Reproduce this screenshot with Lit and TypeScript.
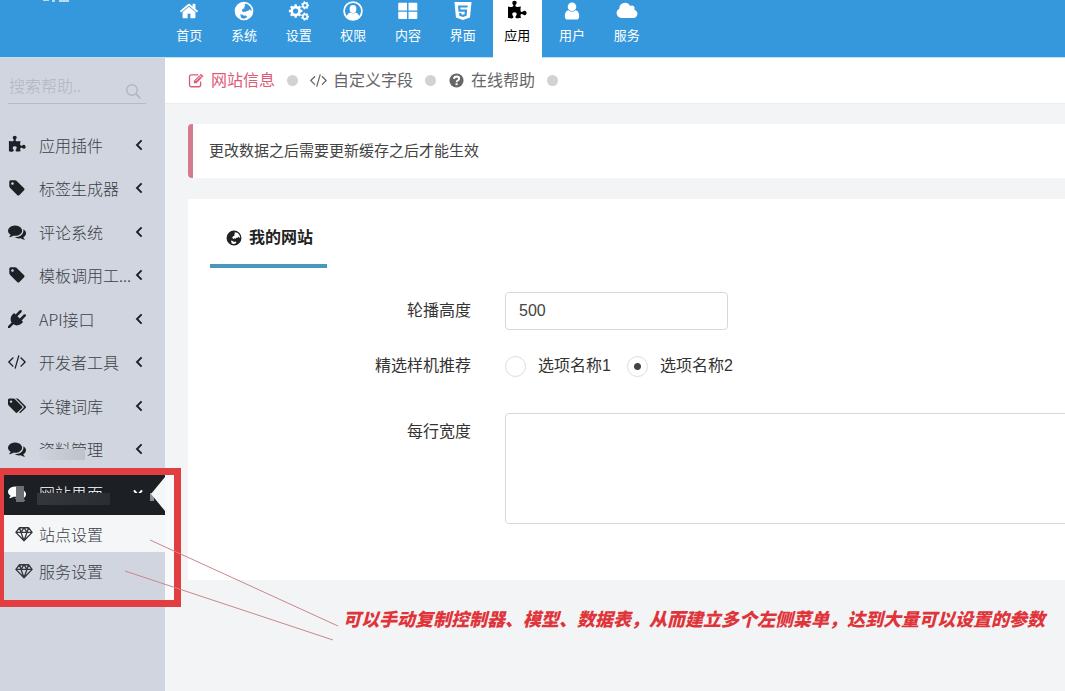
import { LitElement, html, css, svg, TemplateResult } from "lit";
import { customElement, property, state } from "lit/decorators.js";
import { classMap } from "lit/directives/class-map.js";

/** Outline of a toothed wheel with a round hole. */
function gear(cx: number, cy: number, r: number, teeth: number, hole: number): string {
  const pts: string[] = [];
  const step = (Math.PI * 2) / teeth;
  for (let i = 0; i < teeth; i++) {
    const a = i * step;
    for (const [k, rr] of [[-0.3, 0.78], [-0.22, 1], [0.22, 1], [0.3, 0.78]]) {
      pts.push(`${(cx + Math.cos(a + k * step) * r * rr).toFixed(1)} ${(cy + Math.sin(a + k * step) * r * rr).toFixed(1)}`);
    }
  }
  return `M${pts.join("L")}ZM${cx - hole} ${cy}a${hole} ${hole} 0 1 0 ${hole * 2} 0a${hole} ${hole} 0 1 0 ${-hole * 2} 0Z`;
}

interface Glyph { box: string; body: TemplateResult; }

const solid = (d: string, box = "0 0 1792 1792"): Glyph => ({
  box,
  body: svg`<path fill="currentColor" fill-rule="evenodd" d=${d}></path>`,
});

const COMMENTS = "M1408 768q0 139-94 257t-256.5 186.5-353.5 68.5q-86 0-176-16-124 88-278 128-36 9-86 16h-3q-11 0-20.5-8t-11.5-21q-1-3-1-6.5t.5-6.5 2-6l2.5-5 3.5-5.5 4-5 4.5-5 4-4.5q5-6 23-25t26-29.5 22.5-29 25-38.5 20.5-44q-124-72-195-177t-71-224q0-139 94-257t256.5-186.5 353.5-68.5 353.5 68.5 256.5 186.5 94 257zm384 256q0 120-71 224.5t-195 176.5q10 24 20.5 44t25 38.5 22.5 29 26 29.5 23 25q1 1 4 4.5t4.5 5 4 5 3.5 5.5l2.5 5 2 6 .5 6.5-1 6.5q-3 14-13 22t-22 7q-50-7-86-16-154-40-278-128-90 16-176 16-271 0-472-132 58 4 88 4 161 0 309-45t264-129q125-92 192-212t67-254q0-77-23-152 129 71 204 178t75 230z";

const GLYPHS: Record<string, Glyph> = {
  home: solid("M1472 992v480q0 26-19 45t-45 19h-384v-384h-256v384h-384q-26 0-45-19t-19-45v-480q0-1 .5-3t.5-3l575-474 575 474q1 2 1 6zm223-69l-62 74q-8 9-21 11h-3q-13 0-21-7l-692-577-692 577q-12 8-24 7-13-2-21-11l-62-74q-8-10-7-23.5t11-21.5l719-599q32-26 76-26t76 26l244 204v-195q0-14 9-23t23-9h192q14 0 23 9t9 23v408l219 182q10 8 11 21.5t-7 23.5z"),
  globe: solid("M896 60a836 836 0 1 0 0 1672a836 836 0 1 0 0-1672ZM1010 240L1260 310L1430 460L1550 680L1590 900L1500 860L1440 760L1350 790L1270 900L1160 880L1060 980L940 930L860 1010L760 940L700 800L800 690L960 640L900 540L1010 440L940 330ZM560 1180L760 1230L900 1330L1060 1300L1180 1400L1020 1540L860 1580L640 1500Z"),
  cogs: solid(gear(640, 900, 620, 8, 235) + gear(1500, 380, 370, 7, 130) + gear(1500, 1410, 370, 7, 130), "40 0 1820 1792"),
  usercircle: {
    box: "0 0 20 20",
    body: svg`<circle cx="10" cy="10" r="8.9" fill="none" stroke="currentColor" stroke-width="1.8"></circle>
      <ellipse cx="10" cy="8" rx="3.4" ry="3.9" fill="currentColor"></ellipse>
      <path fill="currentColor" d="M3.6 15.6q1.2-3.9 3.8-4.2q2.6 1.7 5.2 0q2.6.3 3.8 4.2q-2.6 3-6.4 3t-6.4-3Z"></path>`,
  },
  grid: solid("M20 250q0-90 90-90h700v680h-790ZM940 160h700q90 0 90 90v590h-790ZM20 960h790v660h-700q-90 0-90-90ZM940 960h790v570q0 90-90 90h-700Z"),
  html5: solid("M130 80h1532l-140 1400-630 232-626-232ZM450 400l46 560h560l-20 230-144 44-144-44-12-110h-190l20 250 326 100 326-100 50-560h-600l-12-180h640l18-190Z"),
  puzzle: solid("M1755 1083q0 81-44.5 135t-123.5 54q-41 0-77.5-17.5t-59-38-56.5-38-71-17.5q-110 0-110 124 0 39 16 115t15 115v5q-22 0-33 1-34 3-97.5 11.5t-115.5 13.5-98 5q-61 0-103-26.5t-42-83.5q0-37 17.5-71t38-56.5 38-59 17.5-77.5q0-79-54-123.5t-135-44.5q-84 0-143 45.5t-59 127.5q0 43 15 83t33.5 64.5 33.5 53 15 50.5q0 45-46 89-37 35-117 35-95 0-245-24-9-2-27.5-4t-27.5-4l-13-2q-1 0-3-1-2 0-2-1v-1024q2 1 17.5 3.5t34 5 21.5 3.5q150 24 245 24 80 0 117-35 46-44 46-89 0-22-15-50.5t-33.5-53-33.5-64.5-15-83q0-82 59-127.5t144-45.5q80 0 134 44.5t54 123.5q0 41-17.5 77.5t-38 59-38 56.5-17.5 71q0 57 42 83.5t103 26.5q64 0 180-15t163-17v2q-1 2-3.5 17.5t-5 34-3.5 21.5q-24 150-24 245 0 80 35 117 44 46 89 46 22 0 50.5-15t53-33.5 64.5-33.5 83-15q82 0 127.5 59t45.5 143z"),
  user: solid("M1536 1399q0 109-62.5 187t-150.5 78h-854q-88 0-150.5-78t-62.5-187q0-85 8.5-160.5t31.5-152 58.5-131 94-89 134.5-34.5q131 128 313 128t313-128q76 0 134.5 34.5t94 89 58.5 131 31.5 152 8.5 160.5zm-256-887q0 159-112.5 271.5t-271.5 112.5-271.5-112.5-112.5-271.5 112.5-271.5 271.5-112.5 271.5 112.5 112.5 271.5z"),
  cloud: solid("M1984 1152q0 159-112.5 271.5t-271.5 112.5h-1088q-185 0-316.5-131.5t-131.5-316.5q0-132 71-241.5t187-163.5q-2-28-2-43 0-212 150-362t362-150q158 0 286.5 88t187.5 230q70-62 166-62 106 0 181 75t75 181q0 75-41 138 129 30 213 134.5t84 239.5z", "104 80 1840 1632"),
  tag: solid("M576 448q0-53-37.5-90.5t-90.5-37.5-90.5 37.5-37.5 90.5 37.5 90.5 90.5 37.5 90.5-37.5 37.5-90.5zm1067 576q0 53-37 90l-491 492q-39 37-91 37-53 0-90-37l-715-716q-38-37-64.5-101t-26.5-117v-416q0-52 38-90t90-38h416q53 0 117 26.5t102 64.5l715 714q37 39 37 91z"),
  tags: solid("M448 448q0-53-37.5-90.5t-90.5-37.5-90.5 37.5-37.5 90.5 37.5 90.5 90.5 37.5 90.5-37.5 37.5-90.5zm1067 576q0 53-37 90l-491 492q-39 37-91 37-53 0-90-37l-715-716q-38-37-64.5-101t-26.5-117v-416q0-52 38-90t90-38h416q53 0 117 26.5t102 64.5l715 714q37 39 37 91zm384 0q0 53-37 90l-491 492q-39 37-91 37-36 0-59-14t-53-45l470-470q37-37 37-90 0-52-37-91l-715-714q-38-38-102-64.5t-117-26.5h224q53 0 117 26.5t102 64.5l715 714q37 39 37 91z", "0 60 1900 1700"),
  comments: solid(COMMENTS),
  plug: solid("M1755 453q37 38 37 90.5t-37 90.5l-401 400 150 150-160 160q-163 163-389.5 186.5t-411.5-100.5l-362 362h-181v-181l362-362q-124-185-100.5-411.5t186.5-389.5l160-160 150 150 400-401q38-37 91-37t90 37 37 90.5-37 90.5l-400 401 234 234 401-400q38-37 91-37t90 37z"),
  code: solid("M553 1399l-50 50q-10 10-23 10t-23-10l-466-466q-10-10-10-23t10-23l466-466q10-10 23-10t23 10l50 50q10 10 10 23t-10 23l-393 393 393 393q10 10 10 23t-10 23zm591-1067l-373 1291q-4 13-15.5 19.5t-23.5 2.5l-62-17q-13-4-19.5-15.5t-2.5-24.5l373-1291q4-13 15.5-19.5t23.5-2.5l62 17q13 4 19.5 15.5t2.5 24.5zm657 651l-466 466q-10 10-23 10t-23-10l-50-50q-10-10-10-23t10-23l393-393-393-393q-10-10-10-23t10-23l50-50q10-10 23-10t23 10l466 466q10 10 10 23t-10 23z", "-20 60 1840 1792"),
  edit: {
    box: "0 0 18 18",
    body: svg`<path fill="none" stroke="currentColor" stroke-width="1.4" d="M13.4 10v3.6q0 2-2 2H3.6q-2 0-2-2V5q0-2 2-2h7.2"></path>
      <path fill="currentColor" d="M6.2 9.2L13.6 1.8L16.4 4.6L9 12H6.2Z"></path>
      <path stroke="#fff" stroke-width=".8" d="M12 3.2l3 3M8 9.6l5-5"></path>`,
  },
  help: {
    box: "0 0 16 16",
    body: svg`<circle cx="8" cy="8" r="6.6" fill="currentColor"></circle>
      <path fill="none" stroke="#fff" stroke-width="1.8" d="M5.6 6.4q.3-2.2 2.5-2.2q2.4.1 2.4 2q0 1.2-1.3 1.8q-1.1.5-1.1 1.6"></path>
      <path fill="#fff" d="M7.1 10.6h2v1.8h-2z"></path>`,
  },
  diamond: {
    box: "0 0 20 18",
    body: svg`<path fill="none" stroke="currentColor" stroke-width="1.5" stroke-linejoin="round" d="M5 2h10l4 5.2-9 9.3-9-9.3ZM1 7.2h18M5 2l1.7 5.2L10 16.5l3.3-9.3L15 2M6.7 7.2L10 2l3.3 5.2"></path>`,
  },
  search: {
    box: "0 0 18 18",
    body: svg`<circle cx="7.4" cy="7.4" r="5.6" fill="none" stroke="currentColor" stroke-width="1.5"></circle>
      <path stroke="currentColor" stroke-width="1.8" d="M11.6 11.6L16.4 16.4"></path>`,
  },
  left: {
    box: "0 0 10 12",
    body: svg`<path fill="none" stroke="currentColor" stroke-width="1.9" d="M7.6 1.4L3 6l4.6 4.6"></path>`,
  },
  down: {
    box: "0 0 12 12",
    body: svg`<path fill="none" stroke="currentColor" stroke-width="2" d="M2 3.4L6 8l4-4.6"></path>`,
  },
};

@customElement("ui-icon")
class UiIcon extends LitElement {
  @property() name = "";
  static styles = css`
    :host { display: inline-flex; flex: none; width: 18px; height: 18px; }
    .glyph { display: block; width: 100%; height: 100%; overflow: visible; }
  `;
  render() {
    const g = GLYPHS[this.name];
    return g ? html`<svg class="glyph" viewBox=${g.box} aria-hidden="true">${g.body}</svg>` : null;
  }
}

const NAV = [
  ["home", "首页"], ["globe", "系统"], ["cogs", "设置"], ["usercircle", "权限"], ["grid", "内容"],
  ["html5", "界面"], ["puzzle", "应用"], ["user", "用户"], ["cloud", "服务"],
];

const MENU = [
  ["puzzle", "应用插件"], ["tag", "标签生成器"], ["comments", "评论系统"], ["tag", "模板调用工..."],
  ["plug", "API接口"], ["code", "开发者工具"], ["tags", "关键词库"], ["comments", "资料管理"],
];

const CRUMBS = [["edit", "网站信息"], ["code", "自定义字段"], ["help", "在线帮助"]];

@customElement("app-root")
class AppRoot extends LitElement {
  @state() private active = "应用";

  static styles = css`
    :host {
      display: flex; flex-direction: column; position: relative; overflow: hidden;
      min-height: 100vh; box-sizing: border-box; background: #f3f4f5; color: #333;
      font: 16px/24px "Liberation Sans", "Noto Sans CJK SC", sans-serif;
    }
    * { box-sizing: border-box; }
    a { color: inherit; text-decoration: none; }
    ul { list-style: none; margin: 0; padding: 0; }

    .header { display: flex; height: 58px; background: #3598dc; border-bottom: 1px solid #b9e2f5; }
    .brand { width: 165px; flex: none; padding-left: 43px; }
    .logo { display: block; width: 28px; height: 3px; }
    .nav { display: grid; grid-template-columns: repeat(9, 1fr); column-gap: 6px; width: 486px; }
    .tab {
      display: flex; flex-direction: column; align-items: center; gap: 6px; padding: 1px 0 0;
      border: 0; background: none; color: #fff; font: inherit; font-size: 13px; line-height: 18px; cursor: pointer;
    }
    .tab ui-icon { width: 20px; height: 20px; }
    .tab.on { background: #fff; color: #000; margin-bottom: -1px; }

    .body { display: flex; flex: 1; }
    .side { width: 165px; flex: none; background: #d0d5df; color: #3c4046; font-family: "Noto Sans CJK SC", sans-serif; font-weight: 300; }
    .search {
      display: flex; align-items: center; height: 38px; margin: 8px 19px 19px 8px;
      border-bottom: 1px solid #b5bac5; color: #b1b6c0;
    }
    .query {
      flex: 1; min-width: 0; border: 0; padding: 0 1px; outline: 0; background: none;
      font: inherit; color: #555;
    }
    .query::placeholder { color: #b0b5bf; opacity: 1; }
    .find { display: flex; align-self: flex-end; padding: 0 4px 3px 0; border: 0; background: none; color: inherit; }
    .find ui-icon { width: 17px; height: 17px; }
    .menu { display: grid; grid-template-columns: minmax(0, 1fr); grid-auto-rows: 1fr; height: 348px; }
    .entry { display: flex; align-items: center; height: 100%; padding: 0 21px 0 8px; }
    .entry ui-icon { color: #1d2126; }
    .entry .arrow { width: 10px; height: 12px; }
    .name { flex: 1; min-width: 0; margin-left: 13px; white-space: nowrap; position: relative; }
    .smudge::after {
      content: ""; position: absolute; left: 0; top: 12px; width: 46px; height: 11px;
      background: linear-gradient(90deg, #cdd2db, #bdc2cb);
    }
    .entry.current { position: relative; height: 44px; background: #1c1f23; color: #fff; }
    .current ui-icon { color: #fff; }
    .current .name::after {
      content: ""; position: absolute; left: -2px; top: 12px; width: 73px; height: 12px;
      background: linear-gradient(90deg, #34373c, #2a2d31);
    }
    .entry.current .arrow { width: 12px; color: #fff; clip-path: inset(0 0 6px 0); }
    .entry.current ui-icon { color: #fff; }
    .chip { position: absolute; left: 16px; top: 15px; width: 8px; height: 16px; background: #6d7074; }
    .hook { position: absolute; right: 0; top: 5px; width: 15px; height: 36px; }
    .sub { display: flex; align-items: center; gap: 6px; height: 37px; padding-left: 15px; }
    .sub ui-icon { color: #33373c; }
    .sub.on { background: #f5f6f8; }

    .main { flex: 1; min-width: 0; }
    .crumbs { display: flex; align-items: center; height: 46px; padding-left: 23px; background: #fff; color: #666; border-bottom: 1px solid #ececee; }
    .crumb { display: flex; align-items: center; gap: 6px; }
    .crumb::after { content: ""; width: 11px; height: 11px; margin: 0 12px 0 6px; border-radius: 50%; background: #d2d2d2; }
    .crumb ui-icon { width: 17px; height: 17px; }
    .crumb.on { color: #dc5c78; }
    .notice {
      margin: 20px 0 0 23px; padding: 15px 16px; background: #fff; border-left: 5px solid #d57b8c;
      border-radius: 4px 0 0 4px; font-size: 15px; line-height: 24px; color: #444;
    }
    .card { margin: 21px 0 0 23px; padding: 21px 0 56px 22px; background: #fff; }
    .title {
      display: inline-flex; align-items: center; gap: 7px; height: 48px; padding: 0 14px 8px 16px; margin: 0;
      border-bottom: 4px solid #4a97bd; font-size: 16px; font-weight: 700; color: #222;
    }
    .title ui-icon { width: 16px; height: 16px; }
    .form { display: grid; grid-template-columns: 261px minmax(0, 1fr); column-gap: 34px; margin-top: 24px; color: #333; }
    .label { text-align: right; line-height: 38px; }
    .text, .area { border: 1px solid #d6d8dc; border-radius: 4px; background: #fff; font: inherit; color: #444; outline: 0; }
    .text { width: 223px; height: 38px; padding: 0 13px; }
    .area { display: block; width: calc(100% + 20px); height: 111px; resize: none; padding: 8px 13px; }
    .row { min-height: 38px; }
    .choices { display: flex; align-items: center; gap: 16px; margin: 17px 0 28px; min-height: 38px; }
    .gapped { margin: 17px 0 28px; }
    .choice { display: flex; align-items: center; gap: 12px; }
    .radio {
      appearance: none; width: 21px; height: 21px; margin: 0; border: 1px solid #dcdcdc; border-radius: 50%; background: #fff;
    }
    .radio:checked { background: radial-gradient(circle, #444 0 3px, #fff 4px); }

    .frame { position: absolute; left: -3px; top: 468px; width: 184px; height: 139px; border: 7px solid #e23e42; }
    .pad { position: absolute; left: 165px; top: 475px; width: 9px; height: 125px; background: #f8f9fa; }
    .lines { position: absolute; left: 120px; top: 530px; width: 220px; height: 115px; }
    .remark {
      position: absolute; left: 343px; top: 608px; margin: 0; white-space: nowrap;
      font-size: 18px; line-height: 24px; font-weight: 900; font-style: italic; color: #e0343b;
    }
  `;

  render() {
    return html`
      <header class="header">
        <div class="brand">
          <svg class="logo" viewBox="0 0 28 3" aria-hidden="true"><path fill="#b9daf1" d="M0 0h6v1h-6zM9 0h3v2h-3zM16 0h10v2h-10z"></path></svg>
        </div>
        <nav class="nav">
          ${NAV.map(([icon, name]) => html`
            <button class=${classMap({ tab: true, on: name === this.active })} @click=${() => (this.active = name)}>
              <ui-icon name=${icon}></ui-icon><span>${name}</span>
            </button>`)}
        </nav>
      </header>
      <div class="body">
        <aside class="side">
          <div class="search">
            <input class="query" type="text" placeholder="搜索帮助.." aria-label="搜索帮助" />
            <button class="find" aria-label="搜索"><ui-icon name="search"></ui-icon></button>
          </div>
          <ul class="menu">
            ${MENU.map(([icon, name], i) => html`
              <li><a class="entry" href="#">
                <ui-icon name=${icon}></ui-icon>
                <span class=${classMap({ name: true, smudge: i === 7 })}>${name}</span>
                <ui-icon class="arrow" name="left"></ui-icon>
              </a></li>`)}
          </ul>
          <a class="entry current" href="#">
            <ui-icon name="comments"></ui-icon><span class="chip"></span>
            <span class="name">网站界面</span>
            <ui-icon class="arrow" name="down"></ui-icon>
            <svg class="hook" viewBox="0 0 15 36" aria-hidden="true">
              <path fill="#8d9094" d="M0 17h4v8h-4z"></path><path fill="#f5f6f8" d="M15 1L1 18L15 35Z"></path>
            </svg>
          </a>
          <ul>
            <li><a class="sub on" href="#"><ui-icon name="diamond"></ui-icon>站点设置</a></li>
            <li><a class="sub" href="#"><ui-icon name="diamond"></ui-icon>服务设置</a></li>
          </ul>
        </aside>
        <main class="main">
          <nav class="crumbs">
            ${CRUMBS.map(([icon, name], i) => html`
              <a class=${classMap({ crumb: true, on: i === 0 })} href="#"><ui-icon name=${icon}></ui-icon>${name}</a>`)}
          </nav>
          <div class="notice">更改数据之后需要更新缓存之后才能生效</div>
          <section class="card">
            <h2 class="title"><ui-icon name="globe"></ui-icon>我的网站</h2>
            <form class="form">
              <label class="label" for="height">轮播高度</label>
              <div class="row"><input class="text" id="height" type="text" value="500" /></div>
              <span class="label gapped" id="pick">精选样机推荐</span>
              <div class="choices" role="radiogroup" aria-labelledby="pick">
                <label class="choice"><input class="radio" type="radio" name="pick" />选项名称1</label>
                <label class="choice"><input class="radio" type="radio" name="pick" checked />选项名称2</label>
              </div>
              <label class="label" for="width">每行宽度</label>
              <textarea class="area" id="width"></textarea>
            </form>
          </section>
        </main>
      </div>
      <div class="pad"></div>
      <div class="frame"></div>
      <svg class="lines" viewBox="0 0 220 115" aria-hidden="true">
        <path fill="none" stroke="#c9878c" stroke-width="1" d="M30 10L218 96M5 41L213 110"></path>
      </svg>
      <p class="remark">可以手动复制控制器、模型、数据表，从而建立多个左侧菜单，达到大量可以设置的参数</p>
    `;
  }
}
